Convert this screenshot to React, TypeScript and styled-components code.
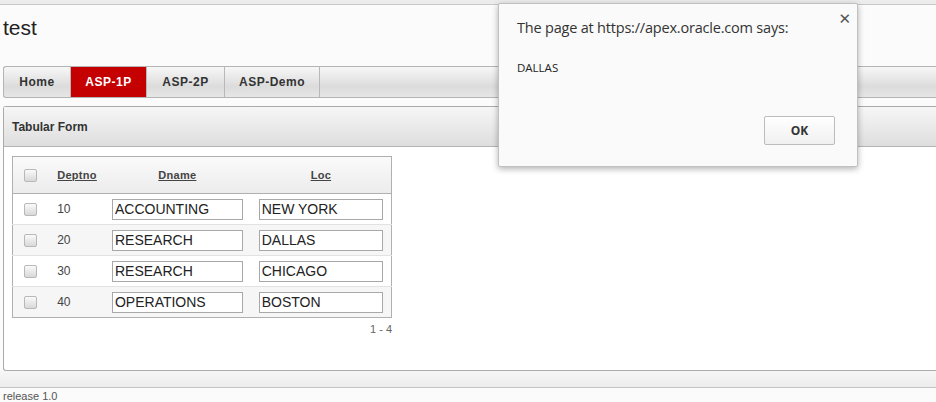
import React from 'react';
import styled, { createGlobalStyle } from 'styled-components';

const GlobalStyle = createGlobalStyle`
  html, body {
    margin: 0;
    padding: 0;
    background: #ffffff;
    font-family: 'Liberation Sans', Arial, sans-serif;
    overflow: hidden;
  }
`;

const Page = styled.div`
  width: 936px;
  height: 402px;
  position: relative;
  overflow: hidden;
  background: #fbfbfb;
`;

const TopStrip = styled.div`
  height: 4px;
  background: #ececec;
  border-bottom: 1px solid #c8c8c8;
`;

const Header = styled.div`
  height: 61px;
  padding-left: 3px;
  display: flex;
  align-items: flex-start;
`;

const SiteTitle = styled.h1`
  margin: 11px 0 0;
  font-size: 21px;
  font-weight: normal;
  color: #222;
`;

const TabBar = styled.nav`
  margin-left: 3px;
  height: 30px;
  border: 1px solid #b4b4b4;
  border-right: none;
  border-radius: 3px 0 0 3px;
  background: linear-gradient(#f7f7f7, #dcdcdc 65%, #e6e6e6);
  display: flex;
`;

const Tab = styled.div<{ $active?: boolean; $w: number }>`
  display: flex;
  align-items: center;
  justify-content: center;
  width: ${p => p.$w}px;
  font-size: 12px;
  font-weight: bold;
  letter-spacing: 0.5px;
  color: ${p => (p.$active ? '#fff' : '#333')};
  background: ${p => (p.$active ? '#c40000' : 'transparent')};
  border-right: 1px solid #b8b8b8;
`;

const Region = styled.section`
  margin: 8px 0 0 3px;
  height: 263px;
  border: 1px solid #aaaaaa;
  border-right: none;
  border-radius: 3px 0 0 3px;
  background: #fff;
  display: flex;
  flex-direction: column;
`;

const RegionHeader = styled.div`
  height: 39px;
  border-bottom: 1px solid #b4b4b4;
  background: linear-gradient(#f6f6f6, #dedede);
  display: flex;
  align-items: center;
  padding-left: 8px;
  font-size: 12px;
  font-weight: bold;
  color: #333;
`;

const RegionBody = styled.div`
  padding: 9px 8px;
  display: flex;
  flex-direction: column;
  align-items: flex-start;
`;

const TableWrap = styled.div`
  display: flex;
  flex-direction: column;
  align-items: flex-end;
`;

const Table = styled.table`
  border-collapse: collapse;
  border: 1px solid #b0b0b0;
  width: 380px;
  font-size: 12px;
  color: #444;
`;

const HeadRow = styled.tr`
  height: 37px;
  background: linear-gradient(#fafafa, #ececec);
  border-bottom: 1px solid #b0b0b0;
`;

const Th = styled.th<{ $align?: string }>`
  padding: 0;
  font-size: 11px;
  font-weight: bold;
  color: #444;
  text-align: ${p => p.$align || 'center'};
  letter-spacing: 0.3px;
`;

const SortLink = styled.span<{ $indent?: number }>`
  text-decoration: underline;
  margin-left: ${p => p.$indent || 0}px;
`;

const Row = styled.tr<{ $alt?: boolean }>`
  height: 31px;
  background: ${p => (p.$alt ? '#f6f6f6' : '#fff')};
  border-top: 1px solid #e2e2e2;
`;

const Td = styled.td`
  padding: 0;
  vertical-align: middle;
`;

const Check = styled.span`
  display: block;
  width: 11px;
  height: 11px;
  margin: 0 0 0 11px;
  border: 1px solid #b8b8b8;
  border-radius: 2px;
  background: linear-gradient(#fafafa, #d8d8d8);
`;

const Num = styled.span`
  display: block;
  padding-left: 9px;
  font-size: 12px;
  color: #444;
`;

const Field = styled.input<{ $w: number }>`
  box-sizing: border-box;
  width: ${p => p.$w}px;
  height: 21px;
  margin: 0 0 0 8px;
  padding: 0 2px;
  border: 1px solid #a8a8a8;
  font-family: 'Liberation Sans', Arial, sans-serif;
  font-size: 14px;
  color: #222;
  background: #fff;
`;

const Pagination = styled.div`
  margin-top: 5px;
  font-size: 11px;
  color: #666;
`;

const FooterBand = styled.div`
  height: 16px;
  background: linear-gradient(#f6f6f6, #ececec);
  border-bottom: 1px solid #c4c4c4;
`;

const Release = styled.div`
  padding: 2px 0 0 3px;
  font-size: 11px;
  line-height: 12px;
  color: #555;
`;

const Dialog = styled.div`
  position: absolute;
  left: 498px;
  top: 3px;
  width: 360px;
  height: 164px;
  background: #fafafa;
  border: 1px solid #c0c0c0;
  border-radius: 2px;
  box-shadow: 0 2px 6px rgba(0, 0, 0, 0.3);
  box-sizing: border-box;
  padding: 14px 18px 0 18px;
  display: flex;
  flex-direction: column;
  font-family: 'Open Sans', 'Noto Sans', sans-serif;
`;

const Close = styled.span`
  position: absolute;
  right: 6px;
  top: 6px;
  font-size: 15px;
  color: #555;
  font-family: 'DejaVu Sans', sans-serif;
`;

const DialogTitle = styled.div`
  font-size: 14.5px;
  color: #333;
  letter-spacing: -0.2px;
`;

const DialogMessage = styled.div`
  margin-top: 23px;
  font-size: 11.5px;
  color: #222;
`;

const DialogActions = styled.div`
  margin-top: 41px;
  display: flex;
  justify-content: flex-end;
  padding-right: 4px;
`;

const OkButton = styled.button`
  width: 71px;
  height: 29px;
  border: 1px solid #bcbcbc;
  border-radius: 2px;
  background: linear-gradient(#ffffff, #f0f0f0);
  font-family: 'Open Sans', 'Noto Sans', sans-serif;
  font-size: 12px;
  font-weight: bold;
  color: #333;
`;

const rows = [
  { no: 10, dname: 'ACCOUNTING', loc: 'NEW YORK' },
  { no: 20, dname: 'RESEARCH', loc: 'DALLAS' },
  { no: 30, dname: 'RESEARCH', loc: 'CHICAGO' },
  { no: 40, dname: 'OPERATIONS', loc: 'BOSTON' },
];

const tabs = [
  { label: 'Home', w: 66 },
  { label: 'ASP-1P', w: 75, active: true },
  { label: 'ASP-2P', w: 77 },
  { label: 'ASP-Demo', w: 94 },
];

function App() {
  return (
    <Page>
      <GlobalStyle />
      <TopStrip />
      <Header>
        <SiteTitle>test</SiteTitle>
      </Header>
      <TabBar>
        {tabs.map(t => (
          <Tab key={t.label} $w={t.w} $active={t.active}>{t.label}</Tab>
        ))}
      </TabBar>
      <Region>
        <RegionHeader>Tabular Form</RegionHeader>
        <RegionBody>
          <TableWrap>
            <Table>
              <colgroup>
                <col style={{ width: 36 }} />
                <col style={{ width: 56 }} />
                <col style={{ width: 147 }} />
                <col style={{ width: 141 }} />
              </colgroup>
              <thead>
                <HeadRow>
                  <Th><Check /></Th>
                  <Th $align="left"><SortLink $indent={9}>Deptno</SortLink></Th>
                  <Th><SortLink>Dname</SortLink></Th>
                  <Th><SortLink>Loc</SortLink></Th>
                </HeadRow>
              </thead>
              <tbody>
                {rows.map((r, i) => (
                  <Row key={r.no} $alt={i % 2 === 1}>
                    <Td><Check /></Td>
                    <Td><Num>{r.no}</Num></Td>
                    <Td><Field $w={131} defaultValue={r.dname} /></Td>
                    <Td><Field $w={124} defaultValue={r.loc} /></Td>
                  </Row>
                ))}
              </tbody>
            </Table>
            <Pagination>1 - 4</Pagination>
          </TableWrap>
        </RegionBody>
      </Region>
      <FooterBand />
      <Release>release 1.0</Release>
      <Dialog>
        <Close>✕</Close>
        <DialogTitle>The page at https://apex.oracle.com says:</DialogTitle>
        <DialogMessage>DALLAS</DialogMessage>
        <DialogActions>
          <OkButton>OK</OkButton>
        </DialogActions>
      </Dialog>
    </Page>
  );
}

export default App;
